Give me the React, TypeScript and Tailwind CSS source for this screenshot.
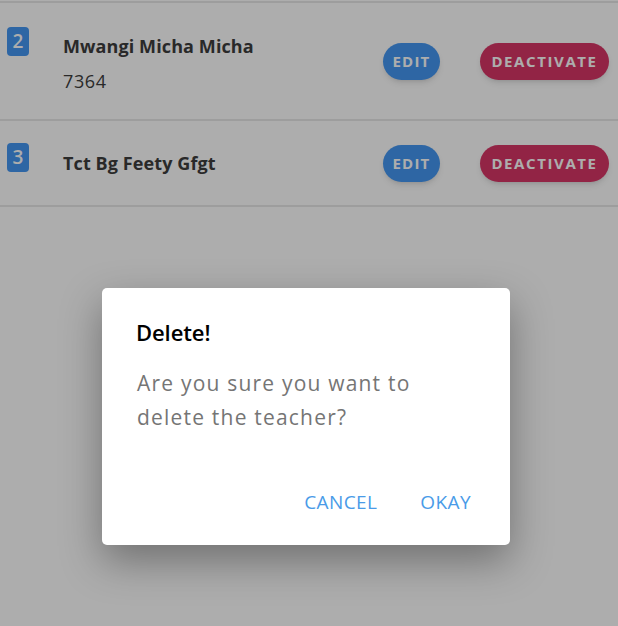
import React from "react";

const rows = [
  { n: 2, name: "Mwangi Micha Micha", sub: "7364" },
  { n: 3, name: "Tct Bg Feety Gfgt", sub: "" },
];

export default function App() {
  return (
    <div className="relative w-[618px] h-[626px] overflow-hidden bg-white" style={{ fontFamily: "'Open Sans', sans-serif" }}>
      <div className="border-t-2 border-[#e8e8e8] mt-[1px]">
        {rows.map((r) => (
          <div key={r.n} className={`flex items-center border-b-2 border-[#e8e8e8] ${r.sub ? "h-[118px]" : "h-[86px]"}`}>
            <div className={`self-start w-[22px] h-[29px] ml-[7px] rounded-[4px] bg-[#4497f2] text-white text-[19px] font-semibold flex items-center justify-center ${r.sub ? "mt-[24px]" : "mt-[22px]"}`}>
              {r.n}
            </div>
            <div className={`ml-[34px] flex flex-col ${r.sub ? "self-start mt-[31px]" : ""}`}>
              <span className="text-[18px] font-bold text-[#3d3d3d] leading-[25px] tracking-[0.1px]">{r.name}</span>
              {r.sub && <span className="text-[18px] text-[#3d3d3d] leading-[25px] mt-[10px] tracking-[0.6px]">{r.sub}</span>}
            </div>
            <div className="ml-auto flex items-center mr-[9px]">
              <button className="w-[57px] h-[37px] rounded-full bg-[#4497f2] text-white text-[15px] font-bold tracking-[1.2px] shadow-md">EDIT</button>
              <button className="ml-[40px] w-[129px] h-[37px] rounded-full bg-[#d83566] text-white text-[15px] font-bold tracking-[1.6px] shadow-md">DEACTIVATE</button>
            </div>
          </div>
        ))}
      </div>

      <div className="absolute inset-0 bg-black/[0.32] flex justify-center items-start pt-[288px]">
        <div className="w-[408px] h-[257px] ml-[-6px] bg-white rounded-[5px] shadow-[0_16px_40px_rgba(0,0,0,0.35)] flex flex-col px-[34px]">
          <div className="mt-[29px] text-[22px] font-semibold text-black leading-[30px] tracking-[-0.1px]">Delete!</div>
          <div className="mt-[19px] ml-[1px] text-[21px] text-[#757575] leading-[34px] tracking-[1.2px]">
            Are you sure you want to
            <br />
            delete the teacher?
          </div>
          <div className="mt-auto mb-[29px] flex justify-end gap-[43px] pr-[5px] text-[19px] text-[#4a9be8] tracking-[0.4px]">
            <span>CANCEL</span>
            <span>OKAY</span>
          </div>
        </div>
      </div>
    </div>
  );
}
